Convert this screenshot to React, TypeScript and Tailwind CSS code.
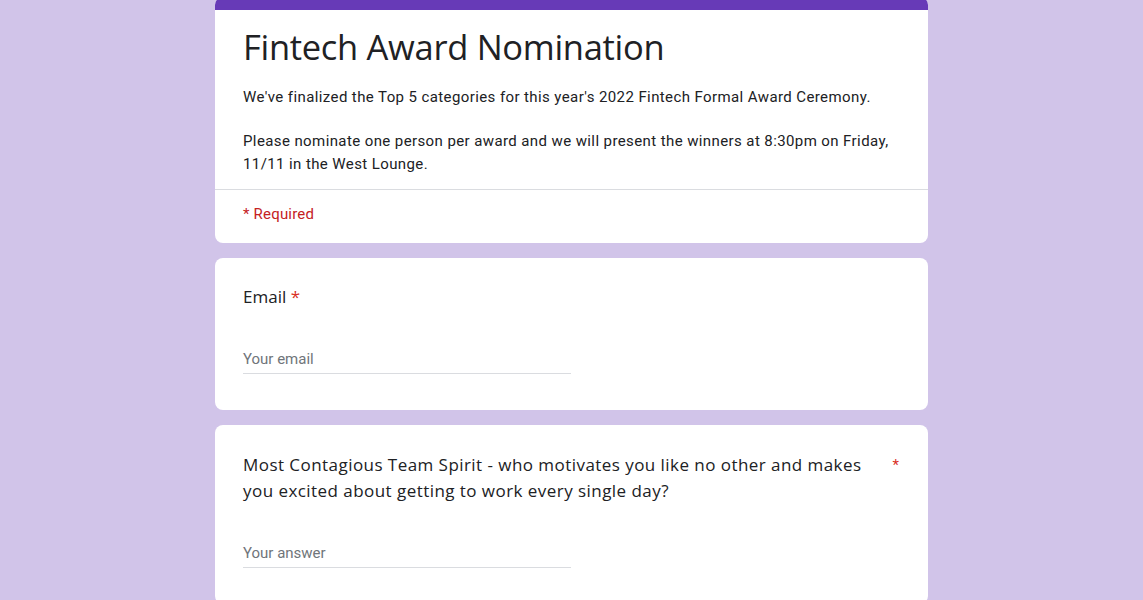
export default function App() {
  return (
    <div className="min-h-[600px] w-full bg-[#d1c4e9] overflow-hidden" style={{ fontFamily: 'Roboto, "Liberation Sans", sans-serif' }}>
      <div className="mx-auto w-[713px] flex flex-col gap-[15px] -mt-[3px]">
        {/* Header card */}
        <div className="bg-white rounded-[8px] overflow-hidden">
          <div className="h-[13px] bg-[#673ab7]" />
          <div className="px-[28px] pt-[15px] pb-[13px] border-b border-[#dadce0]">
            <h1 className="text-[34.5px] leading-[44px] text-[#202124] font-normal" style={{ fontFamily: '"Open Sans", sans-serif', letterSpacing: '-0.3px' }}>
              Fintech Award Nomination
            </h1>
            <div className="mt-[17px] text-[15px] leading-[23px] text-[#202124] tracking-[0.4px]">
              <p>We've finalized the Top 5 categories for this year's 2022 Fintech Formal Award Ceremony.</p>
              <p className="mt-[21px]">
                Please nominate one person per award and we will present the winners at 8:30pm on Friday, 11/11 in the West Lounge.
              </p>
            </div>
          </div>
          <div className="px-[28px] pt-[14px] pb-[19px] text-[15px] leading-[20px] text-[#c5221f] tracking-[0.2px]">
            * Required
          </div>
        </div>

        {/* Email card */}
        <div className="bg-white rounded-[8px] px-[28px] pt-[26px] pb-[36px]">
          <div className="text-[17px] leading-[26px] text-[#202124]" style={{ fontFamily: '"Open Sans", sans-serif' }}>
            Email <span className="text-[#d93025]">*</span>
          </div>
          <div className="mt-[39px] w-[328px] border-b border-[#dadce0] pb-[4px] text-[15px] leading-[20px] text-[#70757a]">
            Your email
          </div>
        </div>

        {/* Question card */}
        <div className="bg-white rounded-[8px] px-[28px] pt-[27px] pb-[36px]">
          <div className="flex justify-between gap-[24px]">
            <div className="text-[17px] leading-[26px] text-[#202124] max-w-[625px] tracking-[0.45px]" style={{ fontFamily: '"Open Sans", sans-serif' }}>
              Most Contagious Team Spirit - who motivates you like no other and makes you excited about getting to work every single day?
            </div>
            <span className="text-[#d93025] text-[15px] leading-[20px] pt-[3px] pr-[1px]">*</span>
          </div>
          <div className="mt-[39px] w-[328px] border-b border-[#dadce0] pb-[4px] text-[15px] leading-[20px] text-[#70757a]">
            Your answer
          </div>
        </div>
      </div>
    </div>
  )
}
